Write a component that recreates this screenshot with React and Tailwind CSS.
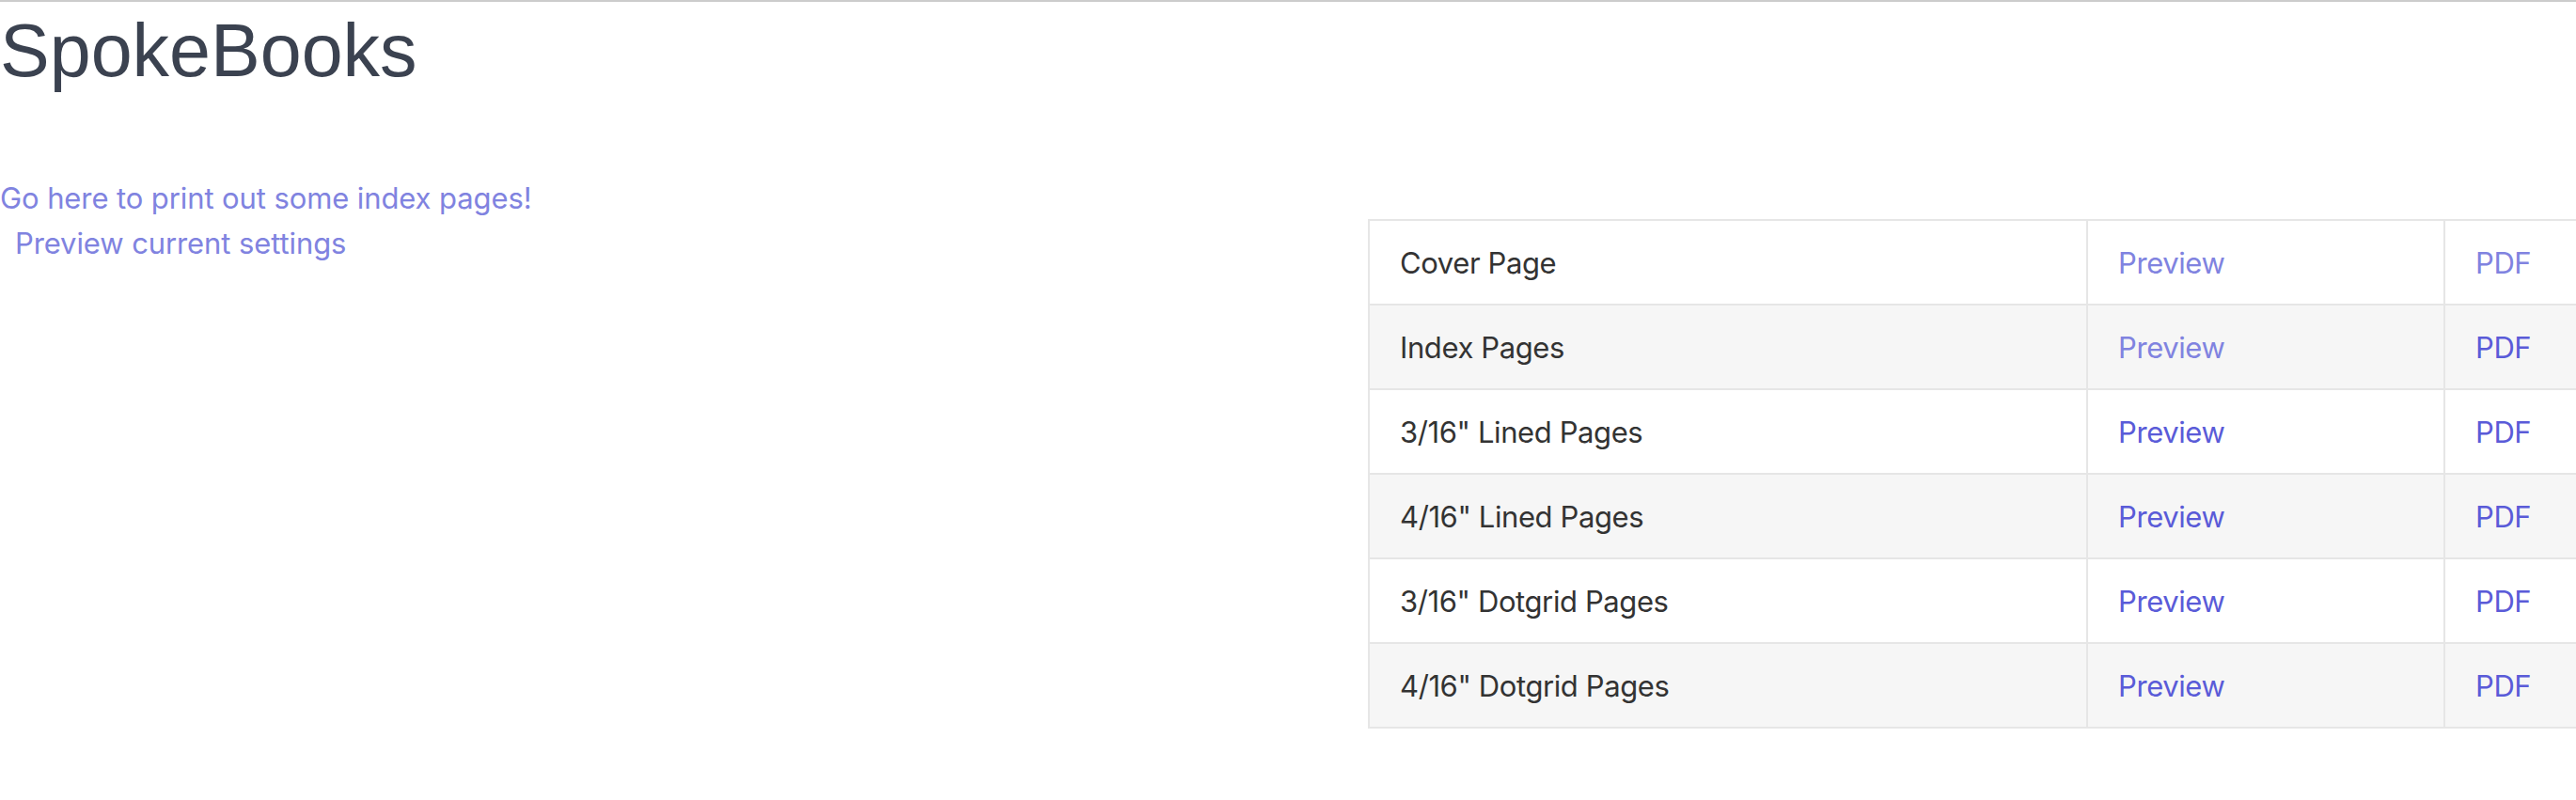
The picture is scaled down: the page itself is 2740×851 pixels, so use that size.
import React from "react";

const LIGHT = "text-[#8083e0]";
const DARK = "text-[#5a5bd8]";

const rows = [
  { name: "Cover Page", prev: LIGHT, pdf: LIGHT },
  { name: "Index Pages", prev: LIGHT, pdf: DARK },
  { name: '3/16" Lined Pages', prev: DARK, pdf: DARK },
  { name: '4/16" Lined Pages', prev: DARK, pdf: DARK },
  { name: '3/16" Dotgrid Pages', prev: DARK, pdf: DARK },
  { name: '4/16" Dotgrid Pages', prev: DARK, pdf: DARK },
];

export default function App() {
  return (
    <div className="w-[2740px] h-[851px] overflow-hidden bg-white border-t-2 border-[#cccccc]">
      <h1 className="mt-[12px] text-[79px] leading-none text-[#3b4250] font-['Liberation_Sans',Arial,sans-serif]">
        SpokeBooks
      </h1>
      <div className="mt-[95px] font-['Inter',sans-serif] text-[31px] leading-[45px]">
        <a href="#" className={`block tracking-[-0.1px] ${LIGHT}`}>Go here to print out some index pages!</a>
        <div className="flex">
          <div className="w-[1455px] shrink-0 pl-[16px] pt-[3px] tracking-[-0.1px]">
            <a href="#" className={LIGHT}>Preview current settings</a>
          </div>
          <table className="table-fixed border-collapse shrink-0 w-[1544px] text-[#333333] tracking-[-0.4px]">
            <colgroup>
              <col className="w-[764px]" />
              <col className="w-[380px]" />
              <col className="w-[400px]" />
            </colgroup>
            <tbody>
              {rows.map((r, i) => (
                <tr key={r.name} className={i % 2 === 1 ? "bg-[#f6f6f6]" : "bg-white"}>
                  <td className="border-2 border-[#e6e6e6] px-[32px] h-[90px] align-middle">{r.name}</td>
                  <td className="border-2 border-[#e6e6e6] px-[32px] h-[90px] align-middle">
                    <a href="#" className={r.prev}>Preview</a>
                  </td>
                  <td className="border-2 border-[#e6e6e6] px-[32px] h-[90px] align-middle">
                    <a href="#" className={r.pdf}>PDF</a>
                  </td>
                </tr>
              ))}
            </tbody>
          </table>
        </div>
      </div>
    </div>
  );
}
